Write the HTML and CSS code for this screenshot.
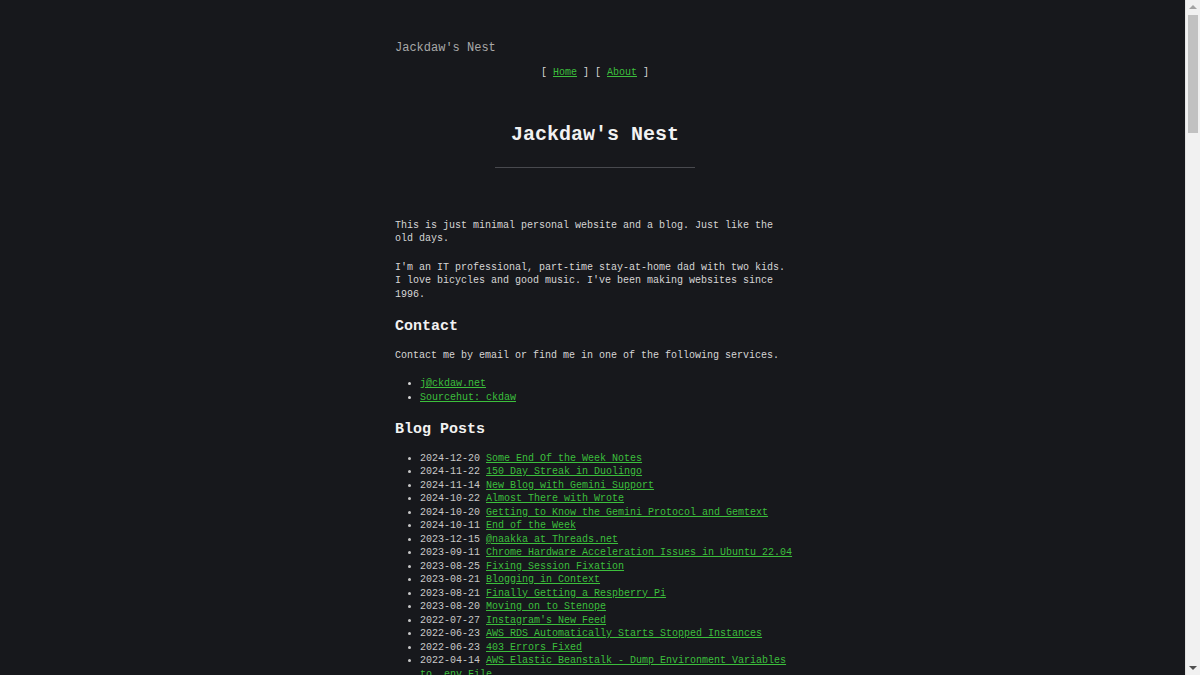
FILE: index.html
```html
<!DOCTYPE html>
<html lang="en">
<head>
<meta charset="utf-8">
<title>Jackdaw's Nest</title>
<link rel="stylesheet" href="styles.css">
</head>
<body>
<div class="page">
  <header class="site-header">
    <div class="site-title">Jackdaw's Nest</div>
    <nav class="site-nav">[ <a href="#">Home</a> ] [ <a href="#">About</a> ]</nav>
  </header>
  <main class="content">
    <h1 class="page-title">Jackdaw's Nest</h1>
    <hr class="rule">
    <p class="intro">This is just minimal personal website and a blog. Just like the old days.</p>
    <p>I'm an IT professional, part-time stay-at-home dad with two kids. I love bicycles and good music. I've been making websites since 1996.</p>
    <h2>Contact</h2>
    <p>Contact me by email or find me in one of the following services.</p>
    <ul>
      <li><a href="#">j@ckdaw.net</a></li>
      <li><a href="#">Sourcehut: ckdaw</a></li>
    </ul>
    <h2>Blog Posts</h2>
    <ul class="posts">
      <li>2024-12-20 <a href="#">Some End Of the Week Notes</a></li>
      <li>2024-11-22 <a href="#">150 Day Streak in Duolingo</a></li>
      <li>2024-11-14 <a href="#">New Blog with Gemini Support</a></li>
      <li>2024-10-22 <a href="#">Almost There with Wrote</a></li>
      <li>2024-10-20 <a href="#">Getting to Know the Gemini Protocol and Gemtext</a></li>
      <li>2024-10-11 <a href="#">End of the Week</a></li>
      <li>2023-12-15 <a href="#">@naakka at Threads.net</a></li>
      <li>2023-09-11 <a href="#">Chrome Hardware Acceleration Issues in Ubuntu 22.04</a></li>
      <li>2023-08-25 <a href="#">Fixing Session Fixation</a></li>
      <li>2023-08-21 <a href="#">Blogging in Context</a></li>
      <li>2023-08-21 <a href="#">Finally Getting a Respberry Pi</a></li>
      <li>2023-08-20 <a href="#">Moving on to Stenope</a></li>
      <li>2022-07-27 <a href="#">Instagram's New Feed</a></li>
      <li>2022-06-23 <a href="#">AWS RDS Automatically Starts Stopped Instances</a></li>
      <li>2022-06-23 <a href="#">403 Errors Fixed</a></li>
      <li>2022-04-14 <a href="#">AWS Elastic Beanstalk - Dump Environment Variables to .env File</a></li>
      <li>2022-03-30 <a href="#">Notes on Symfony Messenger</a></li>
      <li>2022-03-02 <a href="#">Back to Basics</a></li>
      <li>2022-01-18 <a href="#">New Year, Old Bicycle</a></li>
      <li>2021-12-12 <a href="#">Winter Cycling Gear</a></li>
      <li>2021-11-05 <a href="#">Self-hosting a Small Git Server</a></li>
      <li>2021-10-21 <a href="#">Plain Text Everything</a></li>
      <li>2021-09-14 <a href="#">Upgrading to PHP 8</a></li>
      <li>2021-08-30 <a href="#">Summer Holiday Notes</a></li>
      <li>2021-06-11 <a href="#">Records I Have Been Listening To</a></li>
      <li>2021-05-02 <a href="#">Static Site Generators Revisited</a></li>
      <li>2021-03-19 <a href="#">Remote Work with Kids at Home</a></li>
      <li>2021-02-08 <a href="#">Backing Up Photos</a></li>
      <li>2020-12-24 <a href="#">Christmas Eve</a></li>
      <li>2020-11-13 <a href="#">Docker Compose for Local Development</a></li>
      <li>2020-10-01 <a href="#">Fixing Cron Jobs in Containers</a></li>
      <li>2020-08-17 <a href="#">A Week Without Social Media</a></li>
      <li>2020-06-05 <a href="#">Replacing a Bottom Bracket</a></li>
      <li>2020-04-22 <a href="#">Working from Home</a></li>
      <li>2020-02-10 <a href="#">Simple Deploys with rsync</a></li>
      <li>2019-12-30 <a href="#">Year in Review</a></li>
      <li>2019-10-14 <a href="#">Let's Encrypt Renewal Troubles</a></li>
      <li>2019-08-26 <a href="#">Touring Bicycle Build</a></li>
      <li>2019-06-09 <a href="#">Minimal CSS</a></li>
      <li>2019-04-03 <a href="#">Dad Life</a></li>
      <li>2019-01-21 <a href="#">Hello Again</a></li>
      <li>2018-11-11 <a href="#">Vinyl Collection Update</a></li>
      <li>2018-09-02 <a href="#">MySQL Character Set Headaches</a></li>
      <li>2018-06-18 <a href="#">Midsummer Ride</a></li>
      <li>2018-03-07 <a href="#">Vim Configuration Notes</a></li>
      <li>2017-12-01 <a href="#">First Snow</a></li>
      <li>2017-08-15 <a href="#">Moving the Blog</a></li>
      <li>2017-05-22 <a href="#">Learning Go</a></li>
      <li>2017-02-14 <a href="#">Old Websites Never Die</a></li>
      <li>2016-10-09 <a href="#">Twenty Years of Making Websites</a></li>
    </ul>
  </main>
</div>
<div class="scrollbar" aria-hidden="true">
  <div class="scroll-arrow scroll-up"></div>
  <div class="scroll-thumb"></div>
  <div class="scroll-fill"></div>
  <div class="scroll-arrow scroll-down"></div>
</div>
</body>
</html>
```

FILE: styles.css
```css
html {
  background: #17181c;
}

body {
  margin: 0;
  padding: 40px 10px 40px 0;
  background: #17181c;
  color: #d6d6d6;
  font-family: "Liberation Mono", "DejaVu Sans Mono", monospace;
  font-size: 10px;
  line-height: 13.5px;
}

.page {
  width: 400px;
  margin: 0 auto;
}

a {
  color: #3cbf3c;
  text-decoration: underline;
}

.site-title {
  font-size: 12px;
  line-height: 16px;
  color: #a8a8a8;
}

.site-nav {
  margin-top: 10px;
  text-align: center;
  color: #d6d6d6;
}

.page-title {
  margin: 41px 0 0;
  font-size: 20px;
  line-height: 27px;
  font-weight: bold;
  text-align: center;
  color: #f2f2f2;
}

.rule {
  width: 200px;
  height: 1px;
  margin: 19px auto 0;
  border: 0;
  background: #48494e;
}

.intro {
  margin-top: 51px;
}

p {
  margin: 0 0 15px;
}

h2 {
  margin: 15.5px 0 12px;
  font-size: 15px;
  line-height: 20px;
  font-weight: bold;
  color: #f2f2f2;
}

ul {
  margin: 0 0 15px;
  padding-left: 25px;
}

.posts li {
  color: #c8c8c8;
}

/* decorative browser scrollbar seen in the reference */
.scrollbar {
  position: fixed;
  top: 0;
  right: 0;
  bottom: 0;
  width: 15px;
  display: flex;
  flex-direction: column;
  background: #f1f1f1;
  border-left: 1px solid #e4e4e4;
  box-sizing: border-box;
}

.scroll-arrow {
  height: 15px;
  flex: none;
  position: relative;
}

.scroll-arrow::after {
  content: "";
  position: absolute;
  left: 3px;
  border-left: 4px solid transparent;
  border-right: 4px solid transparent;
}

.scroll-up::after {
  top: 5px;
  border-bottom: 4px solid #a3a3a3;
}

.scroll-down::after {
  top: 6px;
  border-top: 4px solid #505050;
}

.scroll-thumb {
  flex: none;
  height: 118px;
  margin: 0 2px;
  background: #c1c1c1;
}

.scroll-fill {
  flex: 1;
}
```
